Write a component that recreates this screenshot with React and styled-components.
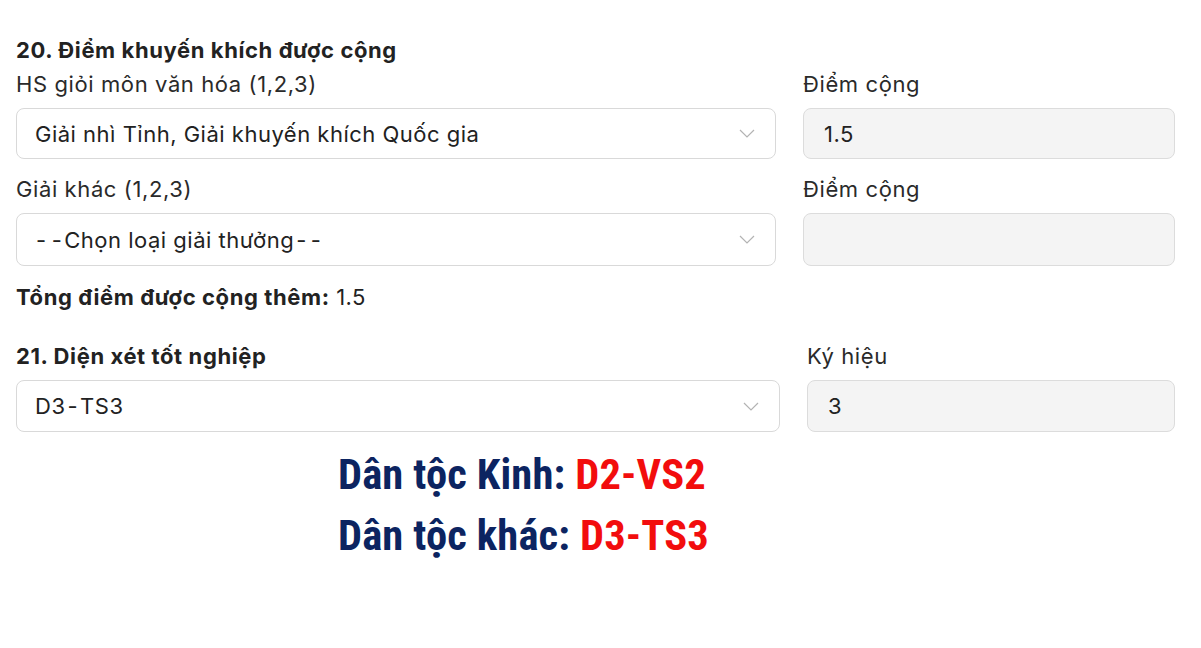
import React from 'react';
import styled, { createGlobalStyle } from 'styled-components';

const GlobalStyle = createGlobalStyle`
  html, body {
    margin: 0;
    background: #ffffff;
  }
  body {
    font-family: Inter, "Noto Sans", sans-serif;
    color: #222;
  }
`;

const Page = styled.div`
  width: 1201px;
  height: 648px;
  box-sizing: border-box;
  padding: 36px 26px 0 16px;
  display: flex;
  flex-direction: column;
`;

const SectionTitle = styled.div`
  font-size: 22px;
  font-weight: 700;
  letter-spacing: 0.6px;
  line-height: 28px;
  color: #222;
`;

const Row = styled.div`
  display: grid;
  grid-template-columns: 1fr ${(p) => p.$side || 372}px;
  column-gap: ${(p) => p.$gap || 27}px;
  margin-top: ${(p) => p.$top || 0}px;
`;

const Field = styled.div`
  display: flex;
  flex-direction: column;
`;

const Label = styled.div`
  font-size: 22px;
  letter-spacing: 0.6px;
  line-height: 28px;
  height: 28px;
  color: #2a2a2a;
  margin-bottom: ${(p) => p.$gapBelow || 10}px;
`;

const SelectBox = styled.div`
  height: ${(p) => p.$h || 51}px;
  box-sizing: border-box;
  border: 1px solid #d9d9d9;
  border-radius: 8px;
  background: #fff;
  display: flex;
  align-items: center;
  padding: 0 20px 0 18px;
  font-size: 22px;
  letter-spacing: 0.5px;
  color: #222;
`;

const SelectText = styled.span`
  flex: 1;
  white-space: nowrap;
`;

const Dash = styled.span`
  margin-left: ${(p) => p.$l || 0}px;
  margin-right: ${(p) => p.$r || 0}px;
`;

const ReadOnlyBox = styled.div`
  height: ${(p) => p.$h || 51}px;
  box-sizing: border-box;
  border: 1px solid #dcdcdc;
  border-radius: 8px;
  background: #f4f4f4;
  display: flex;
  align-items: center;
  padding: 0 20px;
  font-size: 22px;
  letter-spacing: 0.5px;
  color: #222;
`;

const Total = styled.div`
  font-size: 22px;
  letter-spacing: 0.4px;
  line-height: 28px;
  margin-top: 17px;
  color: #222;

  b {
    font-weight: 700;
    letter-spacing: 0.6px;
  }
`;

const Note = styled.div`
  margin-top: 12px;
  margin-left: 322px;
  display: flex;
  flex-direction: column;
`;

const NoteLine = styled.div`
  font-family: Roboto, "Liberation Sans", sans-serif;
  font-stretch: 75%;
  font-weight: 700;
  font-size: 42.5px;
  letter-spacing: 0.15px;
  line-height: 61px;
  color: #0c2461;
  white-space: nowrap;
`;

const Code = styled.span`
  color: #f20d0d;
`;

const Chevron = () => (
  <svg width="16" height="9" viewBox="0 0 16 9" fill="none">
    <path d="M1 1l7 7 7-7" stroke="#b3b3b3" strokeWidth="1.2" />
  </svg>
);

export default function App() {
  return (
    <>
      <GlobalStyle />
      <Page>
        <SectionTitle>20. Điểm khuyến khích được cộng</SectionTitle>
        <Row $top={6}>
          <Field>
            <Label>HS giỏi môn văn hóa (1,2,3)</Label>
            <SelectBox>
              <SelectText>Giải nhì Tỉnh, Giải khuyến khích Quốc gia</SelectText>
              <Chevron />
            </SelectBox>
          </Field>
          <Field>
            <Label>Điểm cộng</Label>
            <ReadOnlyBox>1.5</ReadOnlyBox>
          </Field>
        </Row>
        <Row $top={16}>
          <Field>
            <Label>Giải khác (1,2,3)</Label>
            <SelectBox $h={53}>
              <SelectText>
                <Dash $l={1} $r={5}>-</Dash>
                <Dash $r={2}>-</Dash>Chọn loại giải thưởng<Dash $l={2} $r={4}>-</Dash>-
              </SelectText>
              <Chevron />
            </SelectBox>
          </Field>
          <Field>
            <Label>Điểm cộng</Label>
            <ReadOnlyBox $h={53} />
          </Field>
        </Row>
        <Total>
          <b>Tổng điểm được cộng thêm:</b> 1.5
        </Total>
        <Row $top={31} $side={368}>
          <Field>
            <Label $gapBelow={10}>
              <SectionTitle as="span">21. Diện xét tốt nghiệp</SectionTitle>
            </Label>
            <SelectBox $h={52}>
              <SelectText>
                D3<Dash $l={2} $r={2}>-</Dash>TS3
              </SelectText>
              <Chevron />
            </SelectBox>
          </Field>
          <Field>
            <Label $gapBelow={10}>Ký hiệu</Label>
            <ReadOnlyBox $h={52}>3</ReadOnlyBox>
          </Field>
        </Row>
        <Note>
          <NoteLine>
            Dân tộc Kinh: <Code>D2-VS2</Code>
          </NoteLine>
          <NoteLine>
            Dân tộc khác: <Code>D3-TS3</Code>
          </NoteLine>
        </Note>
      </Page>
    </>
  );
}
